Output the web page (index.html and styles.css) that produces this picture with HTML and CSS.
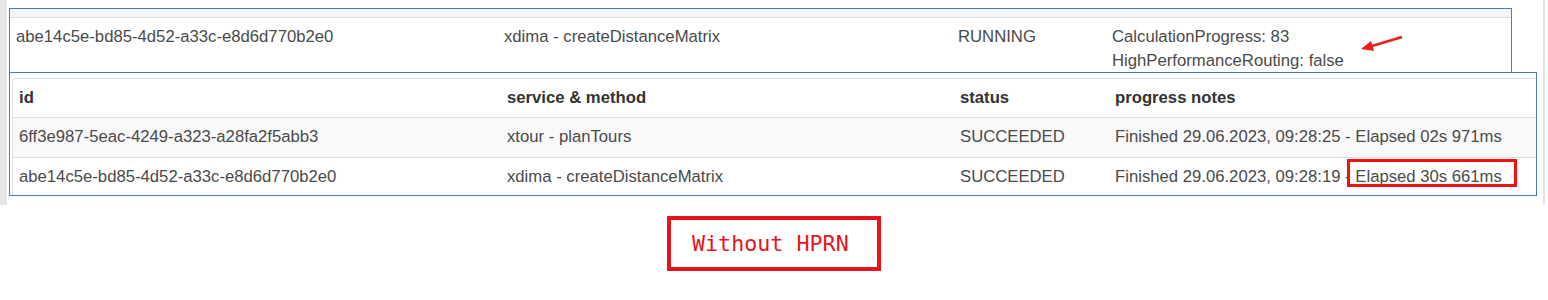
FILE: index.html
```html
<!DOCTYPE html>
<html lang="en">
<head>
    <meta charset="UTF-8">
    <title>Jobs - Without HPRN</title>
    <link rel="stylesheet" href="styles.css">
</head>
<body>
    <div class="frame">
        <div class="gutter"></div>
        <div class="panel">
            <div class="job-box running">
                <div class="band"></div>
                <div class="row">
                    <div class="cell">abe14c5e-bd85-4d52-a33c-e8d6d770b2e0</div>
                    <div class="cell">xdima - createDistanceMatrix</div>
                    <div class="cell">RUNNING</div>
                    <div class="cell">
                        CalculationProgress: 83<br>
                        HighPerformanceRouting: false
                    </div>
                </div>
                <svg class="arrow" width="52" height="26" viewBox="0 0 52 26">
                    <line x1="47" y1="7" x2="17" y2="16" stroke="#ee1c1c" stroke-width="2.4"/>
                    <polygon points="6,19 19,21 16,11" fill="#ee1c1c"/>
                </svg>
            </div>

            <div class="job-box finished">
                <div class="jobs">
                    <div class="row head">
                        <div class="cell">id</div>
                        <div class="cell">service &amp; method</div>
                        <div class="cell">status</div>
                        <div class="cell">progress notes</div>
                    </div>
                    <div class="row odd">
                        <div class="cell">6ff3e987-5eac-4249-a323-a28fa2f5abb3</div>
                        <div class="cell">xtour - planTours</div>
                        <div class="cell">SUCCEEDED</div>
                        <div class="cell">Finished 29.06.2023, 09:28:25 - Elapsed 02s 971ms</div>
                    </div>
                    <div class="row">
                        <div class="cell">abe14c5e-bd85-4d52-a33c-e8d6d770b2e0</div>
                        <div class="cell">xdima - createDistanceMatrix</div>
                        <div class="cell">SUCCEEDED</div>
                        <div class="cell">Finished 29.06.2023, 09:28:19 - <span class="marked">Elapsed 30s 661ms</span></div>
                    </div>
                </div>
            </div>
        </div>
        <div class="edge"></div>
    </div>

    <div class="label">Without HPRN</div>
</body>
</html>
```

FILE: styles.css
```css
* {
    margin: 0;
    padding: 0;
    box-sizing: border-box;
}

body {
    font-family: "Liberation Sans", Arial, sans-serif;
    font-size: 16.7px;
    color: #4a4a4a;
    background: white;
    width: 1548px;
}

.frame {
    display: flex;
    height: 205px;
}

.gutter {
    width: 7px;
    background: #e6e6e6;
}

.panel {
    width: 1536px;
    padding-left: 2px;
    padding-top: 8px;
}

.edge {
    width: 2px;
    background: #e2e2e2;
}

.job-box {
    position: relative;
    border: 1px solid #4a78c8;
    overflow: hidden;
    background: white;
}

.running {
    width: 1503px;
    height: 65px;
}

.finished {
    width: 1528px;
    height: 124px;
    margin-top: -1px;
    padding: 5px 0 0 2px;
}

.band {
    height: 9px;
    background: #f5f5f5;
    border-bottom: 1px solid #dddddd;
}

.row {
    display: grid;
    grid-template-columns: 488px 454px 154px 1fr;
    line-height: 24px;
}

.running .row {
    padding-top: 7px;
}

.cell {
    padding-left: 6px;
    white-space: nowrap;
}

.jobs {
    border: 1px solid #dddddd;
    border-right: none;
    border-radius: 4px 0 0 4px;
}

.jobs .row {
    grid-template-columns: 488px 453px 155px 1fr;
    line-height: 22px;
    padding: 8px 0;
    border-top: 1px solid #dddddd;
}

.jobs .row.head {
    border-top: none;
    font-weight: bold;
    color: #333333;
    padding-bottom: 8px;
}

.jobs .row.odd {
    background: #f9f9f9;
    padding-bottom: 9px;
}

.marked {
    position: relative;
}

.marked::after {
    content: "";
    position: absolute;
    left: -8px;
    right: -15px;
    top: -8px;
    bottom: -1px;
    border: 3px solid #ee1111;
}

.arrow {
    position: absolute;
    left: 1345px;
    top: 21px;
}

.label {
    width: 214px;
    height: 55px;
    margin: 11px auto 0;
    padding-left: 21px;
    border: 4px solid #e8141b;
    color: #e8141b;
    font-family: "DejaVu Sans Mono", "Liberation Mono", monospace;
    font-size: 21.7px;
    line-height: 47px;
}
```
